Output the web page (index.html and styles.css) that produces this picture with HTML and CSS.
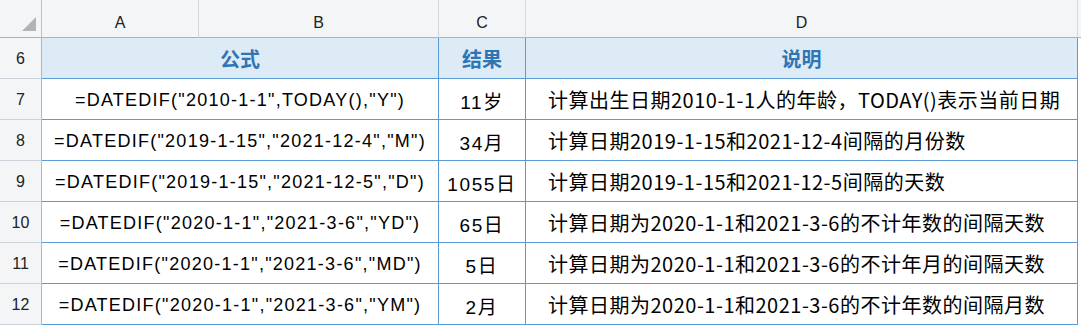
FILE: index.html
```html
<!DOCTYPE html>
<html lang="zh-CN">
<head>
<meta charset="utf-8">
<title>DATEDIF</title>
<link rel="stylesheet" href="styles.css">
</head>
<body>
<div class="sheet">
  <div class="corner"><svg width="14" height="14" viewBox="0 0 14 14"><polygon points="14,0 14,14 0,14" fill="#b3b3b3"/></svg></div>
  <div class="ch">A</div>
  <div class="ch">B</div>
  <div class="ch">C</div>
  <div class="ch">D</div>
  <div class="ch end"></div>

  <div class="rh">6</div>
  <div class="cell th ab">公式</div>
  <div class="cell th">结果</div>
  <div class="cell th">说明</div>
  <div class="tail"></div>

  <div class="rh">7</div>
  <div class="cell ab">=DATEDIF("2010-1-1",TODAY(),"Y")</div>
  <div class="cell res">11岁</div>
  <div class="cell desc">计算出生日期2010-1-1人的年龄，TODAY()表示当前日期</div>
  <div class="tail"></div>

  <div class="rh">8</div>
  <div class="cell ab">=DATEDIF("2019-1-15","2021-12-4","M")</div>
  <div class="cell res">34月</div>
  <div class="cell desc">计算日期2019-1-15和2021-12-4间隔的月份数</div>
  <div class="tail"></div>

  <div class="rh">9</div>
  <div class="cell ab">=DATEDIF("2019-1-15","2021-12-5","D")</div>
  <div class="cell res">1055日</div>
  <div class="cell desc">计算日期2019-1-15和2021-12-5间隔的天数</div>
  <div class="tail"></div>

  <div class="rh">10</div>
  <div class="cell ab">=DATEDIF("2020-1-1","2021-3-6","YD")</div>
  <div class="cell res">65日</div>
  <div class="cell desc">计算日期为2020-1-1和2021-3-6的不计年数的间隔天数</div>
  <div class="tail"></div>

  <div class="rh">11</div>
  <div class="cell ab">=DATEDIF("2020-1-1","2021-3-6","MD")</div>
  <div class="cell res">5日</div>
  <div class="cell desc">计算日期为2020-1-1和2021-3-6的不计年月的间隔天数</div>
  <div class="tail"></div>

  <div class="rh">12</div>
  <div class="cell ab">=DATEDIF("2020-1-1","2021-3-6","YM")</div>
  <div class="cell res">2月</div>
  <div class="cell desc">计算日期为2020-1-1和2021-3-6的不计年数的间隔月数</div>
  <div class="tail"></div>
</div>
</body>
</html>
```

FILE: styles.css
```css
* { box-sizing: border-box; }
html, body { margin: 0; padding: 0; background: #ffffff; }
body { width: 1081px; height: 327px; overflow: hidden; }

.sheet {
  display: grid;
  grid-template-columns: 42px 157px 240px 87px 552px 3px;
  grid-template-rows: 38px repeat(7, 41px);
  font-family: "Liberation Sans", "Noto Sans CJK SC", sans-serif;
  color: #000;
}

.corner {
  background: #f4f5f7;
  border-right: 1px solid #bcc3ce;
  border-bottom: 1px solid #a9b2c3;
  display: flex;
  align-items: flex-start;
  justify-content: flex-start;
  padding: 17px 0 0 22px;
}
.corner svg { display: block; }

.ch {
  background: #f4f5f7;
  border-right: 1px solid #d3d7dd;
  border-bottom: 1px solid #a9b2c3;
  display: flex;
  align-items: center;
  justify-content: center;
  font-size: 16px;
  color: #222;
  padding-top: 8px;
}
.ch.end { border-right: none; }

.rh {
  background: #f4f5f7;
  border-right: 1px solid #aeb6c5;
  border-bottom: 1px solid #cdd2da;
  display: flex;
  align-items: center;
  justify-content: center;
  font-size: 16px;
  color: #222;
  padding-top: 2px;
}

.cell {
  border-right: 1px solid #5b9bd5;
  border-bottom: 1px solid #5b9bd5;
  display: flex;
  align-items: center;
  justify-content: center;
  font-size: 18px;
  letter-spacing: 1.25px;
  white-space: nowrap;
  padding-top: 3px;
}
.cell.ab { grid-column: span 2; }
.cell.res {
  font-size: 19px;
  letter-spacing: 1.6px;
}
.cell.desc {
  justify-content: flex-start;
  padding-left: 22px;
  padding-top: 1px;
  font-family: "Noto Sans CJK SC", sans-serif;
  font-size: 20px;
  letter-spacing: 0.5px;
}

.th {
  background: #ddebf7;
  color: #2e75b6;
  font-family: "Noto Sans CJK SC", sans-serif;
  font-weight: bold;
  font-size: 20px;
  letter-spacing: 0;
  padding-top: 0;
}

.tail { background: #fff; }
```
